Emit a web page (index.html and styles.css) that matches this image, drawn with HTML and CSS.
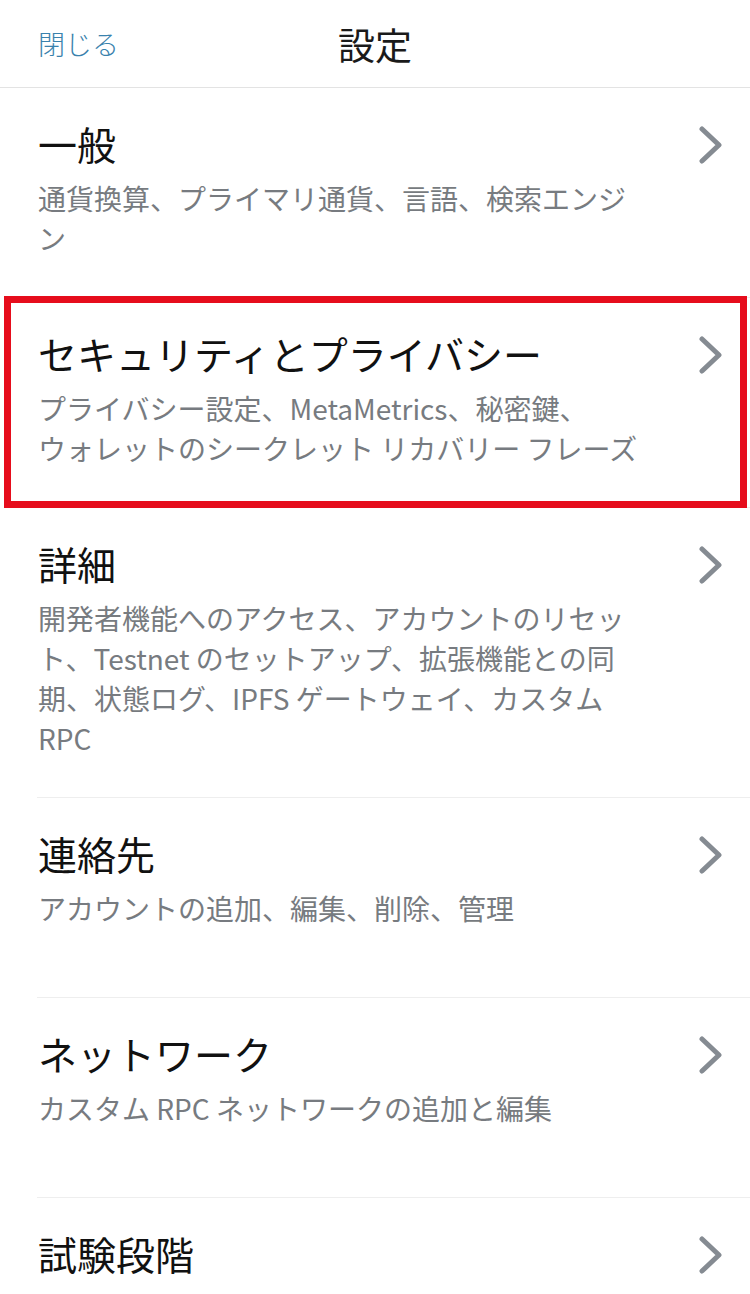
FILE: index.html
```html
<!DOCTYPE html>
<html lang="ja">
<head>
    <meta charset="UTF-8">
    <meta name="viewport" content="width=device-width, initial-scale=1.0">
    <title>設定</title>
    <link rel="stylesheet" href="styles.css">
</head>
<body>
<div class="header">
    <a class="close-link" href="#">閉じる</a>
    <div class="header-title">設定</div>
    <div></div>
</div>
<div class="settings-list">
    <a class="row" href="#">
        <div class="row-text">
            <div class="row-title">一般</div>
            <div class="row-desc">通貨換算、プライマリ通貨、言語、検索エンジン</div>
        </div>
        <svg class="chev" viewBox="0 0 24 38"><path d="M3 3 L20 19 L3 35" /></svg>
    </a>
    <a class="row highlight" href="#">
        <div class="row-text">
            <div class="row-title">セキュリティとプライバシー</div>
            <div class="row-desc">プライバシー設定、MetaMetrics、秘密鍵、ウォレットのシークレット リカバリー フレーズ</div>
        </div>
        <svg class="chev" viewBox="0 0 24 38"><path d="M3 3 L20 19 L3 35" /></svg>
    </a>
    <a class="row" href="#">
        <div class="row-text">
            <div class="row-title">詳細</div>
            <div class="row-desc">開発者機能へのアクセス、アカウントのリセット、Testnet のセットアップ、拡張機能との同期、状態ログ、IPFS ゲートウェイ、カスタム RPC</div>
        </div>
        <svg class="chev" viewBox="0 0 24 38"><path d="M3 3 L20 19 L3 35" /></svg>
    </a>
    <a class="row" href="#">
        <div class="row-text">
            <div class="row-title">連絡先</div>
            <div class="row-desc">アカウントの追加、編集、削除、管理</div>
        </div>
        <svg class="chev" viewBox="0 0 24 38"><path d="M3 3 L20 19 L3 35" /></svg>
    </a>
    <a class="row" href="#">
        <div class="row-text">
            <div class="row-title">ネットワーク</div>
            <div class="row-desc">カスタム RPC ネットワークの追加と編集</div>
        </div>
        <svg class="chev" viewBox="0 0 24 38"><path d="M3 3 L20 19 L3 35" /></svg>
    </a>
    <a class="row row-last" href="#">
        <div class="row-text">
            <div class="row-title">試験段階</div>
        </div>
        <svg class="chev" viewBox="0 0 24 38"><path d="M3 3 L20 19 L3 35" /></svg>
    </a>
</div>
</body>
</html>
```

FILE: styles.css
```css
body, html {
    margin: 0;
    background-color: #ffffff;
    font-family: "Noto Sans CJK JP", "Noto Sans", sans-serif;
    color: #141414;
}
.header {
    height: 87px;
    border-bottom: 1px solid #e3e3e3;
    display: grid;
    grid-template-columns: 1fr auto 1fr;
    align-items: center;
    padding: 0 38px;
}
.close-link {
    font-size: 27px;
    color: #3a82ad;
    text-decoration: none;
    font-weight: 300;
}
.header-title {
    font-size: 37px;
    font-weight: 400;
    color: #1a1a1a;
}
.settings-list {
    overflow: hidden;
}
.row {
    display: flex;
    justify-content: space-between;
    align-items: flex-start;
    box-sizing: border-box;
    min-height: 200px;
    margin-left: 37px;
    padding: 31px 27px 39px 1px;
    border-bottom: 1px solid #eeeeee;
    text-decoration: none;
    color: inherit;
    position: relative;
}
.row-last {
    min-height: 0;
    border-bottom: none;
}
.row-text {
    width: 602px;
}
.row-title {
    font-size: 39px;
    line-height: 48px;
    color: #111111;
}
.row-desc {
    margin-top: 11px;
    font-size: 28px;
    line-height: 40px;
    color: #777b80;
    line-break: strict;
}
.chev {
    width: 24px;
    height: 38px;
    margin-top: 7px;
    flex-shrink: 0;
}
.chev path {
    fill: none;
    stroke: #858b92;
    stroke-width: 5;
    stroke-linecap: round;
    stroke-linejoin: round;
}
.highlight::after {
    content: "";
    position: absolute;
    top: -2px;
    bottom: -1px;
    left: -33px;
    right: 3px;
    border: 7px solid #e60d1c;
    pointer-events: none;
}
```
